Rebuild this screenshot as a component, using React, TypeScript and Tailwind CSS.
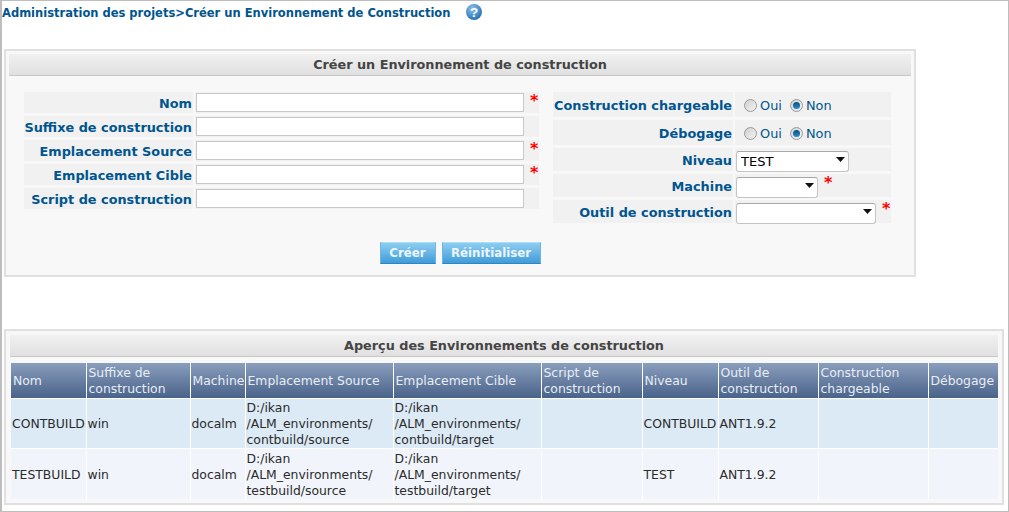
import React from "react";

const Star = () => (
  <span className="text-[#ff0000] font-bold text-[16px] leading-none self-start ml-[6px] mt-[1px]">*</span>
);

function Label({ children, className = "" }: { children: React.ReactNode; className?: string }) {
  return (
    <div className={`bg-[#f1f1f1] flex items-center justify-end pr-[1px] pt-[2px] font-bold text-[12.85px] text-[#00558f] whitespace-nowrap ${className}`}>
      {children}
    </div>
  );
}

function TextRow({ label, req }: { label: string; req?: boolean }) {
  return (
    <div className="flex h-[21px] gap-[2px]">
      <Label className="w-[169px]">{label}</Label>
      <div className="flex-1 bg-[#f1f1f1] flex items-center pl-[1px]">
        <input className="w-[328px] h-[19px] bg-white border border-[#c8c8c8] outline-none" />
        {req && <Star />}
      </div>
    </div>
  );
}

function Radio({ on }: { on?: boolean }) {
  return (
    <span className="w-[13px] h-[13px] rounded-full border border-[#9a9a9a] bg-gradient-to-br from-[#d0d0d0] to-[#f4f4f4] flex items-center justify-center">
      {on && <span className="w-[7px] h-[7px] rounded-full bg-gradient-to-b from-[#0a4f80] to-[#2a8fd0]" />}
    </span>
  );
}

function RadioRow({ label, h }: { label: string; h: string }) {
  return (
    <div className={`flex gap-[2px] ${h}`}>
      <Label className="w-[180px]">{label}</Label>
      <div className="flex-1 bg-[#f1f1f1] flex items-center pl-[9px] pt-[2px] text-[12.9px] text-[#00558f]">
        <Radio />
        <span className="ml-[3px]">Oui</span>
        <span className="ml-[8px]"><Radio on /></span>
        <span className="ml-[3px]">Non</span>
      </div>
    </div>
  );
}

function Select({ w, value, req }: { w: string; value?: string; req?: boolean }) {
  return (
    <div className="flex-1 bg-[#f1f1f1] flex items-center pl-[1px]">
      <div className={`relative ${w} h-[21px]`}>
        <select className="appearance-none w-full h-full bg-white border border-[#c4c4c4] border-t-[#a8a8a8] rounded-[3px] pl-[4px] pb-[4px] text-[13px] text-black outline-none">
          <option>{value ?? ""}</option>
        </select>
        <svg className="absolute right-[4px] top-[8px]" width="9" height="5" viewBox="0 0 9 5">
          <path d="M0 0h9L4.5 5z" fill="#111" />
        </svg>
      </div>
      {req && <Star />}
    </div>
  );
}

function SelectRow({ label, w, value, req, h }: { label: string; w: string; value?: string; req?: boolean; h: string }) {
  return (
    <div className={`flex gap-[2px] ${h}`}>
      <Label className="w-[180px]">{label}</Label>
      <Select w={w} value={value} req={req} />
    </div>
  );
}

function PanelTitle({ children }: { children: React.ReactNode }) {
  return (
    <div className="h-[22px] bg-gradient-to-b from-[#f1f1f1] to-[#e0e0e0] border-b border-[#c8c8c8] flex items-center justify-center font-bold text-[12.8px] text-[#444444]">
      {children}
    </div>
  );
}

function Btn({ children, w }: { children: React.ReactNode; w: string }) {
  return (
    <button className={`${w} h-[22px] pt-[2px] bg-gradient-to-b from-[#8dcdf0] to-[#3f9bd8] border-t border-t-[#a9e0f8] border-b border-b-[#2b86c6] border-x border-x-[#6bb6e4] text-[11.8px] font-bold text-[#eaf6fd]`}>
      {children}
    </button>
  );
}

const cols = [75, 104, 55, 148, 148, 101, 76, 100, 110, 70];
const heads = ["Nom", "Suffixe de construction", "Machine", "Emplacement Source", "Emplacement Cible", "Script de construction", "Niveau", "Outil de construction", "Construction chargeable", "Débogage"];
const rows = [
  ["CONTBUILD", "win", "docalm", "D:/ikan /ALM_environments/ contbuild/source", "D:/ikan /ALM_environments/ contbuild/target", "", "CONTBUILD", "ANT1.9.2", "", ""],
  ["TESTBUILD", "win", "docalm", "D:/ikan /ALM_environments/ testbuild/source", "D:/ikan /ALM_environments/ testbuild/target", "", "TEST", "ANT1.9.2", "", ""],
];

export default function App() {
  return (
    <div className="w-[1009px] h-[512px] overflow-hidden bg-white border border-l-2 border-[#bdbdbd] font-['DejaVu_Sans','Liberation_Sans',sans-serif]">
      <div className="h-[48px] flex items-start pt-[4px]">
        <span className="font-bold text-[11.5px] leading-[16px] text-[#00558f]">Administration des projets&gt;Créer un Environnement de Construction</span>
        <svg className="ml-[16px] mt-[-1px]" width="16" height="16" viewBox="0 0 16 16">
          <defs>
            <radialGradient id="h" cx="40%" cy="30%" r="75%">
              <stop offset="0" stopColor="#8fc0ea" />
              <stop offset="1" stopColor="#1f6db0" />
            </radialGradient>
          </defs>
          <circle cx="8" cy="8" r="8" fill="url(#h)" />
          <text x="8" y="12.7" textAnchor="middle" fontSize="13.5" fontWeight="bold" fill="#fff" fontFamily="Liberation Sans">?</text>
        </svg>
      </div>

      <div className="ml-[2px] w-[912px] h-[228px] border-2 border-[#e0e0e0] bg-[#f8f8f8] p-[3px]">
        <PanelTitle>Créer un Environnement de construction</PanelTitle>
        <div className="flex pt-[16px] pl-[15px]">
          <div className="w-[515px] flex flex-col gap-[3px]">
            <TextRow label="Nom" req />
            <TextRow label="Suffixe de construction" />
            <TextRow label="Emplacement Source" req />
            <TextRow label="Emplacement Cible" req />
            <TextRow label="Script de construction" />
          </div>
          <div className="w-[338px] ml-[14px] flex flex-col gap-[3px]">
            <RadioRow label="Construction chargeable" h="h-[25px]" />
            <RadioRow label="Débogage" h="h-[25px]" />
            <SelectRow label="Niveau" w="w-[113px]" value="TEST" h="h-[23px]" />
            <SelectRow label="Machine" w="w-[82px]" req h="h-[23px]" />
            <SelectRow label="Outil de construction" w="w-[140px]" req h="h-[23px]" />
          </div>
        </div>
        <div className="flex justify-center gap-[6px] mt-[19px]">
          <Btn w="w-[56px]">Créer</Btn>
          <Btn w="w-[99px]">Réinitialiser</Btn>
        </div>
      </div>

      <div className="ml-[2px] mt-[52px] w-[1000px] h-[176px] border-2 border-[#e0e0e0] bg-[#f8f8f8] p-[4px]">
        <PanelTitle>Aperçu des Environnements de construction</PanelTitle>
        <table className="mt-[6px] ml-[1px] w-[987px] table-fixed border-collapse text-[12.4px] leading-[16px]">
          <colgroup>
            {cols.map((c, i) => (
              <col key={i} style={{ width: c }} />
            ))}
          </colgroup>
          <thead>
            <tr className="h-[35px]">
              {heads.map((h) => (
                <th key={h} className="bg-gradient-to-b from-[#8a9ebd] to-[#4a6389] border-r border-white last:border-r-0 font-normal text-left text-[#e8edf4] pl-[2px] pt-[1px] align-middle">
                  {h}
                </th>
              ))}
            </tr>
          </thead>
          <tbody>
            {rows.map((r, i) => (
              <tr key={i} className={i === 0 ? "bg-[#dceaf6]" : "bg-[#f1f5fb]"}>
                {r.map((c, j) => (
                  <td key={j} className={`h-[50px] border-r border-t border-white last:border-r-0 pl-[1px] text-[#2b2b2b] align-middle break-words ${i === 0 ? "pt-[1px]" : "pt-[2px]"}`}>
                    {c}
                  </td>
                ))}
              </tr>
            ))}
          </tbody>
        </table>
      </div>
    </div>
  );
}
